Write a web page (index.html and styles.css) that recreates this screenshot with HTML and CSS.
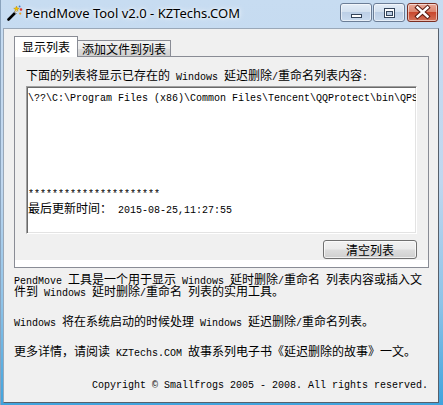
FILE: index.html
```html
<!DOCTYPE html>
<html lang="zh-CN">
<head>
<meta charset="utf-8">
<title>PendMove Tool v2.0 - KZTechs.COM</title>
<link rel="stylesheet" href="styles.css">
</head>
<body>
<div class="window">
  <div class="titlebar">
    <svg class="app-icon" width="16" height="16" viewBox="0 0 16 16">
      <line x1="1.5" y1="14.5" x2="8.5" y2="7.5" stroke="#000" stroke-width="2.6" stroke-linecap="round"/>
      <line x1="8" y1="8" x2="10" y2="6" stroke="#fff" stroke-width="2.2"/>
      <line x1="8" y1="8" x2="10" y2="6" stroke="#777" stroke-width="0.6"/>
      <path d="M9.5 1 L10.3 3 L12.3 3.3 L10.6 4.4 L11 6.4 L9.5 5.1 L8 6.4 L8.4 4.4 L6.7 3.3 L8.7 3 Z" fill="#f5c400" stroke="#b08000" stroke-width="0.4"/>
      <circle cx="14" cy="4.5" r="1.3" fill="#e0342a"/>
      <circle cx="13.2" cy="8.6" r="1.1" fill="#f0a020"/>
      <circle cx="12.6" cy="1.4" r="0.9" fill="#3a78d0"/>
    </svg>
    <span class="title">PendMove Tool v2.0 - KZTechs.COM</span>
    <div class="caption">
      <div class="cbtn">
        <svg width="30" height="17" viewBox="0 0 30 17"><rect x="10.5" y="10.5" width="10" height="3" fill="#fff" stroke="#33445a"/></svg>
      </div>
      <div class="cbtn">
        <svg width="30" height="17" viewBox="0 0 30 17"><rect x="10.5" y="4.5" width="10" height="9" fill="#fff" stroke="#33445a"/><rect x="12.5" y="7.5" width="6" height="4" fill="#b9cce3" stroke="#33445a"/></svg>
      </div>
      <div class="cbtn close">
        <svg width="29" height="17" viewBox="0 0 29 17"><path d="M9.5 3.5 L19.5 12.5 M19.5 3.5 L9.5 12.5" stroke="#5a1a10" stroke-width="4.4" stroke-linecap="square"/><path d="M9.5 3.5 L19.5 12.5 M19.5 3.5 L9.5 12.5" stroke="#fff" stroke-width="2.4" stroke-linecap="square"/></svg>
      </div>
    </div>
  </div>
  <div class="frame">
    <div class="client">
      <div class="tabs">
        <div class="tab active">显示列表</div>
        <div class="tab">添加文件到列表</div>
      </div>
      <div class="panel">
        <div class="page">
          <div class="label">下面的列表将显示已存在的<span class="m"> Windows </span>延迟删除<span class="m">/</span>重命名列表内容<span class="m">:</span></div>
          <div class="listbox">
            <div class="row"><span class="m">\??\C:\Program Files (x86)\Common Files\Tencent\QQProtect\bin\QPSvc.exe</span></div>
            <div class="row"></div>
            <div class="row"></div>
            <div class="row"></div>
            <div class="row"></div>
            <div class="row"></div>
            <div class="row"><span class="m">**********************</span></div>
            <div class="row">最后更新时间：<span class="m"> 2015-08-25,11:27:55</span></div>
          </div>
          <div class="actions"><div class="btn">清空列表</div></div>
        </div>
      </div>
      <div class="info">
        <div class="para">
          <div class="line"><span class="m">PendMove </span>工具是一个用于显示<span class="m"> Windows </span>延时删除<span class="m">/</span>重命名<span class="m"> </span>列表内容或插入文</div>
          <div class="line">件到<span class="m"> Windows </span>延时删除<span class="m">/</span>重命名<span class="m"> </span>列表的实用工具。</div>
        </div>
        <div class="para">
          <div class="line"><span class="m">Windows </span>将在系统启动的时候处理<span class="m"> Windows </span>延迟删除<span class="m">/</span>重命名列表。</div>
        </div>
        <div class="para">
          <div class="line">更多详情，请阅读<span class="m"> KZTechs.COM </span>故事系列电子书《延迟删除的故事》一文。</div>
        </div>
        <div class="copyright m">Copyright © Smallfrogs 2005 - 2008. All rights reserved.</div>
      </div>
    </div>
  </div>
</div>
</body>
</html>
```

FILE: styles.css
```css
* { box-sizing: border-box; margin: 0; padding: 0; }
html, body { width: 443px; height: 405px; overflow: hidden; }
body {
  font-family: "Noto Sans CJK SC", sans-serif;
  font-size: 12px;
  color: #000;
  background: #3da3dd;
}
.window {
  width: 443px;
  height: 405px;
  display: flex;
  flex-direction: column;
  background: linear-gradient(to bottom, #c7dcf1 0, #c0d7ef 45%, #8ec3e8 75%, #3fa3dd 100%);
  border-left: 1px solid #8aa3bd;
}
.titlebar {
  height: 28px;
  display: flex;
  align-items: flex-start;
  flex: none;
}
.app-icon { margin: 5px 0 0 6px; flex: none; }
.title {
  margin-left: 2px;
  font-family: "Noto Sans", sans-serif;
  font-size: 13px;
  line-height: 26px;
  color: #000;
  text-shadow: 0 0 6px #fff, 0 0 3px #fff;
  white-space: nowrap;
}
.caption {
  margin: 3px 5px 0 auto;
  display: flex;
  gap: 1px;
}
.cbtn {
  width: 32px;
  height: 19px;
  border: 1px solid #6b7d96;
  border-radius: 3px;
  background: linear-gradient(to bottom, #e4edf7 0, #d3e1f0 45%, #bccfe6 50%, #c9dbef 100%);
  box-shadow: inset 0 0 0 1px rgba(255,255,255,.55);
  display: flex;
}
.cbtn.close {
  width: 31px;
  margin-left: 1px;
  border-color: #7a2e22;
  background: linear-gradient(to bottom, #e9a898 0, #dc8670 45%, #c9472d 50%, #d4735a 100%);
}
.frame {
  flex: 1;
  padding: 0 4px 2px 2px;
  display: flex;
}
.client {
  flex: 1;
  background: #f0f0f0;
  border: 1px solid #9aa8b8;
  border-right-color: #56606c;
  border-bottom-color: #56606c;
  padding: 7px 0 0 10px;
}
.tabs {
  height: 20px;
  display: flex;
  align-items: flex-end;
}
.tab {
  height: 16px;
  border: 1px solid #898c95;
  border-bottom: none;
  background: linear-gradient(to bottom, #f3f3f3 0, #ebebeb 50%, #dddddd 51%, #cfcfcf 100%);
  padding: 0 4px;
  margin-left: -1px;
  line-height: 15px;
  white-space: nowrap;
}
.tab.active {
  height: 21px;
  margin-bottom: -1px;
  margin-left: 0;
  padding: 0 7px;
  background: #fff;
  line-height: 20px;
  position: relative;
  z-index: 1;
}
.panel {
  width: 415px;
  height: 212px;
  border: 1px solid #898c95;
  background: #fff;
}
.page {
  height: 203px;
  background: #f0f0f0;
  padding: 12px 11px 0 11px;
  display: flex;
  flex-direction: column;
}
.label {
  line-height: 12px;
  height: 12px;
  white-space: pre;
}
.m {
  font-family: "Liberation Mono", monospace;
  font-size: 10px;
}
.listbox {
  margin-top: 5px;
  width: 391px;
  height: 148px;
  background: #fff;
  border: 1px solid;
  border-color: #a0a0a0 #ffffff #ffffff #a0a0a0;
  box-shadow: inset 1px 1px 0 #696969, inset -1px -1px 0 #e3e3e3;
  padding: 1px 0 0 1px;
  overflow: hidden;
}
.row {
  height: 16px;
  line-height: 16px;
  white-space: pre;
}
.actions {
  margin-top: 6px;
  display: flex;
  justify-content: flex-end;
}
.btn {
  width: 94px;
  height: 19px;
  border: 1px solid #707070;
  border-radius: 3px;
  background: linear-gradient(to bottom, #f2f2f2 0, #ebebeb 48%, #dddddd 52%, #cfcfcf 100%);
  box-shadow: inset 0 0 0 1px rgba(255,255,255,.7);
  text-align: center;
  line-height: 17px;
}
.info {
  width: 414px;
  padding-top: 5px;
}
.line {
  line-height: 12px;
  height: 12px;
  white-space: pre;
}
.para + .para { margin-top: 18px; }
.copyright {
  margin-top: 23px;
  text-align: right;
  line-height: 12px;
  white-space: pre;
}
```
